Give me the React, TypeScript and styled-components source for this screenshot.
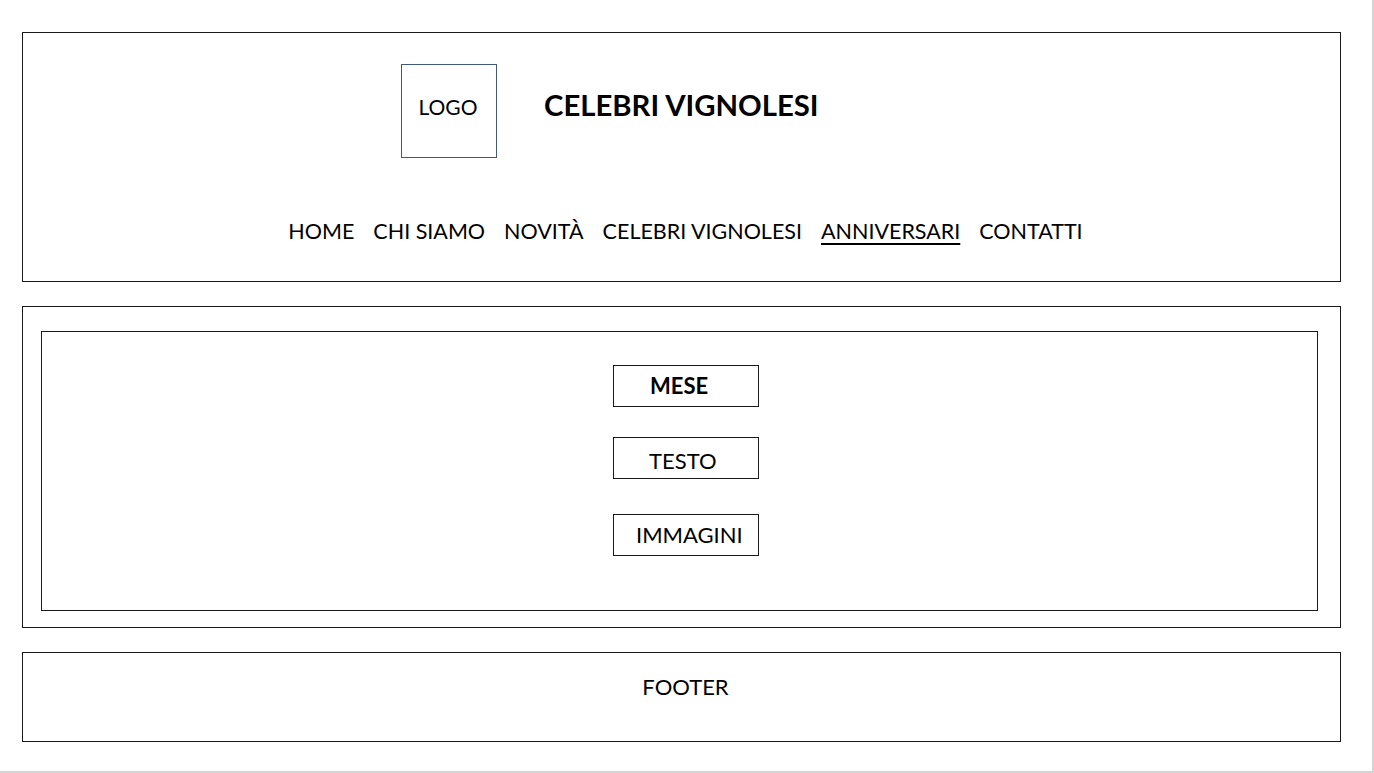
import styled, { createGlobalStyle } from 'styled-components';

const GlobalStyle = createGlobalStyle`
  html, body {
    margin: 0;
    padding: 0;
    background: #ffffff;
  }
  body {
    font-family: Lato, "Open Sans", sans-serif;
    color: #000;
  }
`;

const Page = styled.div`
  width: 1374px;
  height: 773px;
  box-sizing: border-box;
  border-right: 2px solid #d4d4d4;
  border-bottom: 2px solid #d4d4d4;
  padding: 32px 31px 0 22px;
  display: flex;
  flex-direction: column;
  gap: 24px;
`;

const Box = styled.section<{ $height: number }>`
  box-sizing: border-box;
  height: ${(p) => p.$height}px;
  border: 1px solid #1a1a1a;
`;

const Header = styled(Box)`
  display: flex;
  flex-direction: column;
  padding-top: 31px;
`;

const Brand = styled.div`
  display: flex;
  align-items: center;
  gap: 47px;
  padding-left: 378px;
`;

const Logo = styled.div`
  box-sizing: border-box;
  width: 96px;
  height: 94px;
  border: 1px solid #41597c;
  display: flex;
  align-items: center;
  justify-content: center;
  font-size: 21px;
  padding: 0 2px 9px 0;
`;

const Title = styled.h1`
  margin: 0 0 14px;
  font-size: 29.3px;
  font-weight: 700;
`;

const Nav = styled.nav`
  display: flex;
  justify-content: center;
  gap: 19px;
  margin-top: 59px;
  padding-left: 8px;
`;

const NavItem = styled.span<{ $active?: boolean }>`
  font-size: 21.5px;
  line-height: 28px;
  text-decoration: ${(p) => (p.$active ? 'underline' : 'none')};
  text-decoration-thickness: 2px;
  text-underline-offset: 4px;
`;

const Main = styled(Box)`
  padding: 24px 22px 16px 18px;
`;

const Inner = styled.div`
  box-sizing: border-box;
  height: 100%;
  border: 1px solid #1a1a1a;
  display: flex;
  flex-direction: column;
  padding: 33px 0 0 571px;
`;

const Field = styled.div<{ $indent: number; $gap: number; $lift: number; $bold?: boolean }>`
  box-sizing: border-box;
  width: 146px;
  height: 42px;
  border: 1px solid #1a1a1a;
  margin-bottom: ${(p) => p.$gap}px;
  display: flex;
  align-items: center;
  padding-left: ${(p) => p.$indent}px;
  padding-bottom: ${(p) => p.$lift}px;
  padding-top: ${(p) => (p.$lift < 0 ? -p.$lift : 0)}px;
  font-size: 22px;
  font-weight: ${(p) => (p.$bold ? 700 : 400)};
`;

const Footer = styled(Box)`
  display: flex;
  justify-content: center;
  padding-top: 20px;
  padding-left: 8px;
  font-size: 22px;
`;

const navItems = ['HOME', 'CHI SIAMO', 'NOVITÀ', 'CELEBRI VIGNOLESI', 'ANNIVERSARI', 'CONTATTI'];

const App = () => {
  return (
    <>
      <GlobalStyle />
      <Page>
        <Header $height={250}>
          <Brand>
            <Logo>LOGO</Logo>
            <Title>CELEBRI VIGNOLESI</Title>
          </Brand>
          <Nav>
            {navItems.map((item) => (
              <NavItem key={item} $active={item === 'ANNIVERSARI'}>
                {item}
              </NavItem>
            ))}
          </Nav>
        </Header>
        <Main $height={322}>
          <Inner>
            <Field $indent={36} $gap={30} $lift={2} $bold>
              MESE
            </Field>
            <Field $indent={35} $gap={35} $lift={-4}>
              TESTO
            </Field>
            <Field $indent={22} $gap={0} $lift={2}>
              IMMAGINI
            </Field>
          </Inner>
        </Main>
        <Footer $height={90}>FOOTER</Footer>
      </Page>
    </>
  );
};

export default App;
